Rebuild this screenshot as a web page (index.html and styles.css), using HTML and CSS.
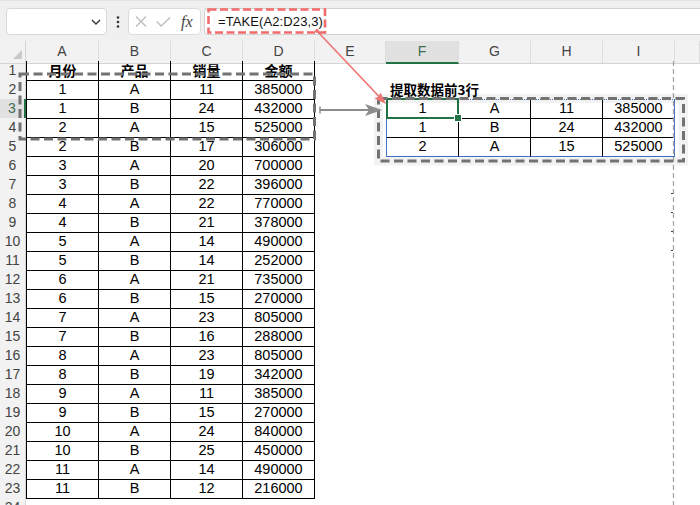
FILE: index.html
```html
<!DOCTYPE html>
<html lang="zh-CN">
<head>
<meta charset="utf-8">
<title>TAKE</title>
<link rel="stylesheet" href="styles.css">
</head>
<body>
<div class="toolbar">
  <div class="namebox">
    <svg class="chev" width="10" height="6" viewBox="0 0 10 6"><path d="M1 1 L5 5 L9 1" fill="none" stroke="#333" stroke-width="1.4"/></svg>
  </div>
  <div class="dots">
    <svg width="4" height="12" viewBox="0 0 4 12"><circle cx="2" cy="1.5" r="1.3" fill="#333"/><circle cx="2" cy="6" r="1.3" fill="#333"/><circle cx="2" cy="10.5" r="1.3" fill="#333"/></svg>
  </div>
  <div class="fbtns">
    <svg width="12" height="11" viewBox="0 0 12 11"><path d="M1 0.5 L11 10.5 M11 0.5 L1 10.5" stroke="#bdbdbd" stroke-width="1.3" fill="none"/></svg>
    <svg width="15" height="10" viewBox="0 0 15 10"><path d="M0.8 4.5 L5 9 L14.2 0.6" stroke="#bdbdbd" stroke-width="1.3" fill="none"/></svg>
    <span class="fx">fx</span>
  </div>
  <div class="fbar"><span class="formula">=TAKE(A2:D23,3)</span></div>
</div>

<div class="sheet">
  <div class="row hdr">
    <div class="corner"><span class="tri"></span></div>
    <div class="ch">A</div><div class="ch">B</div><div class="ch">C</div><div class="ch">D</div><div class="ch">E</div>
    <div class="ch sel">F</div><div class="ch">G</div><div class="ch">H</div><div class="ch">I</div><div class="ch"></div>
  </div>
  <div class="row"><div class="rh">1</div><div class="c a h">月份</div><div class="c h">产品</div><div class="c h">销量</div><div class="c h">金额</div></div>
  <div class="row"><div class="rh">2</div><div class="c a">1</div><div class="c">A</div><div class="c">11</div><div class="c">385000</div><div class="label">提取数据前3行</div></div>
  <div class="row"><div class="rh selr">3</div><div class="c a">1</div><div class="c">B</div><div class="c">24</div><div class="c">432000</div><div class="t f cur">1</div><div class="t">A</div><div class="t">11</div><div class="t i">385000</div></div>
  <div class="row"><div class="rh">4</div><div class="c a">2</div><div class="c">A</div><div class="c">15</div><div class="c">525000</div><div class="t f">1</div><div class="t">B</div><div class="t">24</div><div class="t i">432000</div></div>
  <div class="row"><div class="rh">5</div><div class="c a">2</div><div class="c">B</div><div class="c">17</div><div class="c">306000</div><div class="t f b">2</div><div class="t b">A</div><div class="t b">15</div><div class="t i b">525000</div></div>
  <div class="row"><div class="rh">6</div><div class="c a">3</div><div class="c">A</div><div class="c">20</div><div class="c">700000</div></div>
  <div class="row"><div class="rh">7</div><div class="c a">3</div><div class="c">B</div><div class="c">22</div><div class="c">396000</div></div>
  <div class="row"><div class="rh">8</div><div class="c a">4</div><div class="c">A</div><div class="c">22</div><div class="c">770000</div></div>
  <div class="row"><div class="rh">9</div><div class="c a">4</div><div class="c">B</div><div class="c">21</div><div class="c">378000</div></div>
  <div class="row"><div class="rh">10</div><div class="c a">5</div><div class="c">A</div><div class="c">14</div><div class="c">490000</div></div>
  <div class="row"><div class="rh">11</div><div class="c a">5</div><div class="c">B</div><div class="c">14</div><div class="c">252000</div></div>
  <div class="row"><div class="rh">12</div><div class="c a">6</div><div class="c">A</div><div class="c">21</div><div class="c">735000</div></div>
  <div class="row"><div class="rh">13</div><div class="c a">6</div><div class="c">B</div><div class="c">15</div><div class="c">270000</div></div>
  <div class="row"><div class="rh">14</div><div class="c a">7</div><div class="c">A</div><div class="c">23</div><div class="c">805000</div></div>
  <div class="row"><div class="rh">15</div><div class="c a">7</div><div class="c">B</div><div class="c">16</div><div class="c">288000</div></div>
  <div class="row"><div class="rh">16</div><div class="c a">8</div><div class="c">A</div><div class="c">23</div><div class="c">805000</div></div>
  <div class="row"><div class="rh">17</div><div class="c a">8</div><div class="c">B</div><div class="c">19</div><div class="c">342000</div></div>
  <div class="row"><div class="rh">18</div><div class="c a">9</div><div class="c">A</div><div class="c">11</div><div class="c">385000</div></div>
  <div class="row"><div class="rh">19</div><div class="c a">9</div><div class="c">B</div><div class="c">15</div><div class="c">270000</div></div>
  <div class="row"><div class="rh">20</div><div class="c a">10</div><div class="c">A</div><div class="c">24</div><div class="c">840000</div></div>
  <div class="row"><div class="rh">21</div><div class="c a">10</div><div class="c">B</div><div class="c">25</div><div class="c">450000</div></div>
  <div class="row"><div class="rh">22</div><div class="c a">11</div><div class="c">A</div><div class="c">14</div><div class="c">490000</div></div>
  <div class="row"><div class="rh">23</div><div class="c a">11</div><div class="c">B</div><div class="c">12</div><div class="c">216000</div></div>
  <div class="row"><div class="rh">24</div></div>
</div>

<svg class="overlay" width="700" height="505" viewBox="0 0 700 505">
  <!-- page break line -->
  <line x1="673.5" y1="61" x2="673.5" y2="505" stroke="#a6a6a6" stroke-width="1.3" stroke-dasharray="5 3"/>
  <g stroke="#444" stroke-width="1">
    <line x1="671" y1="193.5" x2="673" y2="193.5"/>
    <line x1="671" y1="212.5" x2="673" y2="212.5"/>
    <line x1="671" y1="231.5" x2="673" y2="231.5"/>
    <line x1="671" y1="250.5" x2="673" y2="250.5"/>
  </g>
  <!-- formula highlight -->
  <rect x="208.5" y="9.5" width="116.5" height="23" fill="none" stroke="#f26b6b" stroke-width="2.6" stroke-dasharray="8 3.5"/>
  <!-- left dashed box -->
  <rect x="20" y="74" width="294.5" height="65" fill="none" stroke="#727272" stroke-width="3" stroke-dasharray="9 4.5"/>
  <!-- right dashed box -->
  <rect x="378.5" y="98.5" width="305" height="62.5" fill="none" stroke="#000" stroke-opacity="0.05" stroke-width="9"/>
  <rect x="378.5" y="98.5" width="305" height="62.5" fill="none" stroke="#727272" stroke-width="3" stroke-dasharray="9 4.5"/>
  <!-- gray arrow -->
  <line x1="320" y1="110" x2="372" y2="110" stroke="#8c8c8c" stroke-width="2"/>
  <line x1="320" y1="106.5" x2="320" y2="113.5" stroke="#8c8c8c" stroke-width="1.5"/>
  <polygon points="382,110 365,104 369,110 365,116" fill="#8c8c8c"/>
  <!-- red arrow -->
  <circle cx="317" cy="31" r="2" fill="#ef7373"/>
  <line x1="317" y1="31" x2="380" y2="97.5" stroke="#ef7373" stroke-width="1.6"/>
  <polygon points="386,104 374.5,98.5 378.5,97 380.5,92.5" fill="#ef7373"/>
</svg>
</body>
</html>
```

FILE: styles.css
```css
* {
  box-sizing: border-box;
  margin: 0;
  padding: 0;
}

html,
body {
  width: 700px;
  height: 505px;
  overflow: hidden;
  background: #ffffff;
}

body {
  position: relative;
  font-family: "Liberation Sans", Arial, "Noto Sans CJK SC", sans-serif;
  color: #000;
}

/* ---------- toolbar ---------- */
.toolbar {
  height: 41px;
  background: #f0f0f0;
  display: flex;
  align-items: flex-start;
  padding-top: 7px;
  border-top: 1px solid #e4e4e4;
}

.namebox {
  margin-left: 6px;
  width: 101px;
  height: 27px;
  background: #fff;
  border: 1px solid #d8d8d8;
  border-radius: 4px;
  display: flex;
  align-items: center;
  justify-content: flex-end;
  padding-right: 5px;
}

.dots {
  width: 21px;
  height: 27px;
  display: flex;
  align-items: center;
  justify-content: center;
}

.fbtns {
  width: 73px;
  height: 27px;
  background: #fff;
  border: 1px solid #dcdcdc;
  border-radius: 4px;
  display: flex;
  align-items: center;
  padding-left: 6px;
  gap: 9px;
}

.fx {
  font-family: "Liberation Serif", "Times New Roman", serif;
  font-style: italic;
  font-size: 16px;
  color: #444;
  margin-left: 1px;
}

.fbar {
  flex: 1;
  margin-left: 3px;
  height: 27px;
  background: #fff;
  border-top: 1px solid #d2d2d2;
  border-bottom: 1px solid #d2d2d2;
  border-left: 1px solid #d2d2d2;
  border-radius: 4px 0 0 4px;
  display: flex;
  align-items: center;
  padding-left: 13px;
}

.formula {
  font-size: 13px;
  color: #111;
  letter-spacing: 0.1px;
}

/* ---------- sheet ---------- */
.sheet {
  display: flex;
  flex-direction: column;
}

.row {
  display: grid;
  grid-template-columns: 26px 73px 72px 72px 72px 71px 73px 72px 72px 72px 1fr;
  height: 19px;
}

.row.hdr {
  height: 20px;
}

.corner {
  background: #f2f2f2;
  border-right: 1px solid #d4d4d4;
  border-bottom: 1px solid #d4d4d4;
  position: relative;
}

.tri {
  position: absolute;
  right: 3px;
  bottom: 4px;
  width: 0;
  height: 0;
  border-left: 9px solid transparent;
  border-bottom: 9px solid #c9c9c9;
}

.ch {
  background: #f2f2f2;
  border-right: 1px solid #dcdcdc;
  border-bottom: 1px solid #d4d4d4;
  text-align: center;
  font-size: 14px;
  line-height: 21px;
  color: #444;
}

.ch.sel {
  background: #e1e1e1;
  border-bottom: 2px solid #217346;
  color: #3d6e4f;
}

.rh {
  background: #f2f2f2;
  border-right: 1px solid #d4d4d4;
  border-bottom: 1px solid #e4e4e4;
  text-align: center;
  font-size: 14px;
  line-height: 19px;
  color: #444;
}

.rh.selr {
  background: #e1e1e1;
  border-right: 2px solid #217346;
  color: #3d6e4f;
}

.c {
  border-right: 1px solid #000;
  border-bottom: 1px solid #000;
  text-align: center;
  font-size: 14.5px;
  line-height: 19px;
}

.c.a {
  border-left: 1px solid #000;
}

.c.h {
  font-family: "Noto Sans CJK SC", "Liberation Sans", sans-serif;
  font-weight: 700;
  font-size: 14px;
  line-height: 18px;
}

.label {
  grid-column: 7 / span 4;
  border-bottom: 1px dotted #4a74c9;
  font-family: "Noto Sans CJK SC", "Liberation Sans", sans-serif;
  font-weight: 700;
  font-size: 13.5px;
  line-height: 18px;
  padding-left: 4px;
}

.t {
  border-right: 1px solid #000;
  border-bottom: 1px solid #000;
  text-align: center;
  font-size: 14.5px;
  line-height: 19px;
}

.t.f {
  grid-column: 7;
  border-left: 1px solid #4472c4;
}

.t.i {
  border-right: 1px solid #4472c4;
}

.t.b {
  border-bottom: 1px solid #4472c4;
}

.t.cur {
  position: relative;
}

.t.cur::after {
  content: "";
  position: absolute;
  left: -1px;
  top: -1px;
  right: -1px;
  bottom: -1px;
  border: 2px solid #217346;
}

.t.cur::before {
  content: "";
  position: absolute;
  right: -4px;
  bottom: -4px;
  width: 6px;
  height: 6px;
  background: #217346;
  border: 1px solid #fff;
  z-index: 2;
}

/* ---------- annotations ---------- */
.overlay {
  position: absolute;
  left: 0;
  top: 0;
  pointer-events: none;
}
```
